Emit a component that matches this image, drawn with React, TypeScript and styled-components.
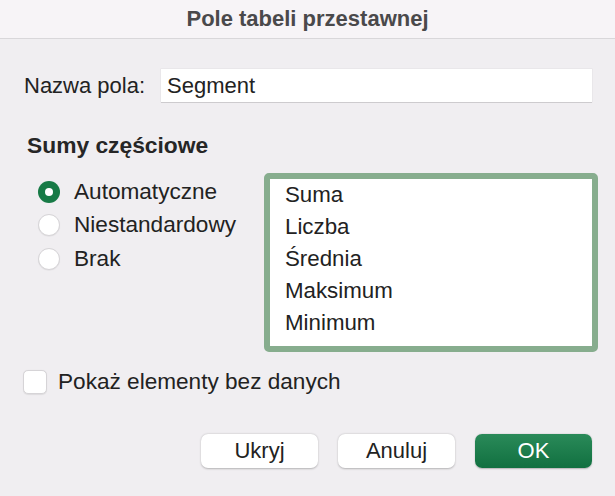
import React, { useState } from "react";
import styled, { createGlobalStyle } from "styled-components";

const GlobalStyle = createGlobalStyle`
  body {
    margin: 0;
    font-family: "Liberation Sans", Arial, sans-serif;
    background: #f0eef1;
  }
`;

const Dialog = styled.div`
  width: 615px;
  height: 496px;
  background: #f0eef1;
  color: #222;
  display: flex;
  flex-direction: column;
  overflow: hidden;
`;

const TitleBar = styled.div`
  height: 38px;
  flex-shrink: 0;
  display: flex;
  align-items: center;
  justify-content: center;
  background: #f7f4f7;
  border-bottom: 1px solid #d9d7da;
  font-size: 22px;
  font-weight: 700;
  color: #4a494b;
`;

const Content = styled.div`
  padding: 30px 23px 0 24px;
  display: flex;
  flex-direction: column;
`;

const FieldRow = styled.div`
  display: flex;
  align-items: center;
  height: 33px;
  gap: 16px;
`;

const Label = styled.label`
  font-size: 22px;
  color: #222;
  white-space: nowrap;
`;

const TextInput = styled.input`
  flex: 1;
  height: 33px;
  box-sizing: border-box;
  border: none;
  outline: none;
  background: #fff;
  padding: 0 6px;
  font-family: inherit;
  font-size: 22px;
  color: #222;
  box-shadow: 0 1px 0 #cdcbce, 0 0 0 0.5px #e2e0e3;
`;

const SectionTitle = styled.div`
  margin-top: 30px;
  padding-left: 3px;
  font-size: 22.8px;
  line-height: 26px;
  font-weight: 700;
  color: #262626;
`;

const Subtotals = styled.div`
  display: flex;
  margin-top: 15px;
  margin-right: -6px;
`;

const RadioGroup = styled.div`
  display: flex;
  flex-direction: column;
  padding: 2px 0 0 14px;
`;

const RadioRow = styled.label`
  display: flex;
  align-items: center;
  gap: 14px;
  height: 33.5px;
  font-size: 22.6px;
  color: #222;
  cursor: pointer;
`;

const RadioDot = styled.span<{ $checked: boolean }>`
  width: 22px;
  height: 22px;
  box-sizing: border-box;
  border-radius: 50%;
  flex-shrink: 0;
  display: flex;
  align-items: center;
  justify-content: center;
  background: ${(p) => (p.$checked ? "#177a46" : "#fff")};
  border: ${(p) => (p.$checked ? "none" : "1px solid #d6d4d7")};
  box-shadow: ${(p) =>
    p.$checked ? "none" : "0 0.5px 1px rgba(0, 0, 0, 0.08)"};

  &::after {
    content: "";
    display: ${(p) => (p.$checked ? "block" : "none")};
    width: 8px;
    height: 8px;
    border-radius: 50%;
    background: #fff;
  }
`;

const ListBox = styled.div`
  margin-left: auto;
  width: 334px;
  height: 179px;
  box-sizing: border-box;
  border: 6px solid #87ad8e;
  border-radius: 5px;
  background: #fff;
  padding-left: 15px;
  display: flex;
  flex-direction: column;
`;

const ListItem = styled.div`
  font-size: 22.3px;
  line-height: 32px;
  color: #222;
`;

const CheckRow = styled.label`
  display: flex;
  align-items: center;
  gap: 11px;
  margin-top: 17px;
  margin-left: -1px;
  font-size: 22.6px;
  color: #222;
  cursor: pointer;
`;

const CheckBox = styled.span`
  width: 24px;
  height: 24px;
  box-sizing: border-box;
  border-radius: 5px;
  background: #fff;
  border: 1px solid #d6d4d7;
  box-shadow: 0 0.5px 1px rgba(0, 0, 0, 0.08);
`;

const Buttons = styled.div`
  display: flex;
  justify-content: flex-end;
  gap: 20px;
  margin-top: 39px;
`;

const Button = styled.button<{ $primary?: boolean }>`
  width: 117px;
  height: 34px;
  border: none;
  border-radius: 7px;
  font-family: inherit;
  font-size: 22px;
  cursor: pointer;
  color: ${(p) => (p.$primary ? "#fff" : "#222")};
  background: ${(p) =>
    p.$primary ? "linear-gradient(#2a8a59, #117040)" : "#fff"};
  box-shadow: ${(p) =>
    p.$primary
      ? "0 0.5px 1.5px rgba(0, 0, 0, 0.25)"
      : "0 0.5px 2px rgba(0, 0, 0, 0.25)"};
`;

const modes = ["Automatyczne", "Niestandardowy", "Brak"];
const functions = ["Suma", "Liczba", "Średnia", "Maksimum", "Minimum"];

const App = () => {
  const [mode, setMode] = useState("Automatyczne");
  const [name, setName] = useState("Segment");

  return (
    <Dialog>
      <GlobalStyle />
      <TitleBar>Pole tabeli przestawnej</TitleBar>
      <Content>
        <FieldRow>
          <Label>Nazwa pola:</Label>
          <TextInput value={name} onChange={(e: any) => setName(e.target.value)} />
        </FieldRow>
        <SectionTitle>Sumy częściowe</SectionTitle>
        <Subtotals>
          <RadioGroup>
            {modes.map((m) => (
              <RadioRow key={m} onClick={() => setMode(m)}>
                <RadioDot $checked={mode === m} />
                {m}
              </RadioRow>
            ))}
          </RadioGroup>
          <ListBox>
            {functions.map((f) => (
              <ListItem key={f}>{f}</ListItem>
            ))}
          </ListBox>
        </Subtotals>
        <CheckRow>
          <CheckBox />
          Pokaż elementy bez danych
        </CheckRow>
        <Buttons>
          <Button>Ukryj</Button>
          <Button>Anuluj</Button>
          <Button $primary>OK</Button>
        </Buttons>
      </Content>
    </Dialog>
  );
};

export default App;
